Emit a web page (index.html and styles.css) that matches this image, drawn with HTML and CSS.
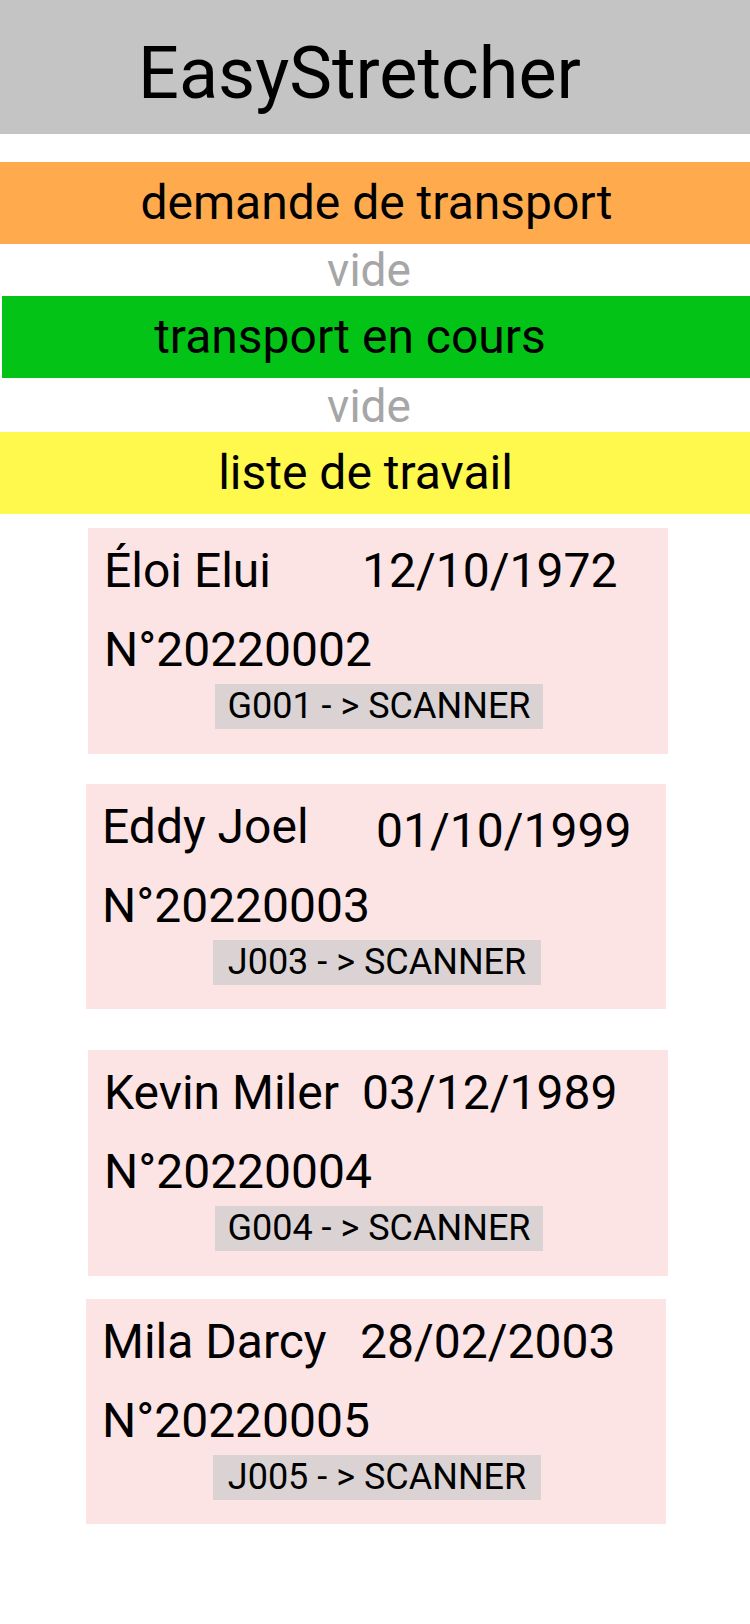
FILE: index.html
```html
<!DOCTYPE html>
<html lang="fr">
<head>
<meta charset="utf-8">
<title>EasyStretcher</title>
<link rel="stylesheet" href="styles.css">
</head>
<body>
<header class="app-header">EasyStretcher</header>

<section class="band band--orange">demande de transport</section>
<div class="empty">vide</div>
<section class="band band--green">transport en cours</section>
<div class="empty empty--tall">vide</div>
<section class="band band--yellow">liste de travail</section>

<main class="worklist">
  <article class="card card--first">
    <div class="card-row">
      <span class="name">Éloi Elui</span>
      <span class="date">12/10/1972</span>
    </div>
    <div class="number">N°20220002</div>
    <div class="chip">G001 - &gt; SCANNER</div>
  </article>

  <article class="card card--left card--gap-m">
    <div class="card-row">
      <span class="name name--wide">Eddy Joel</span>
      <span class="date date--low">01/10/1999</span>
    </div>
    <div class="number">N°20220003</div>
    <div class="chip">J003 - &gt; SCANNER</div>
  </article>

  <article class="card card--gap-l">
    <div class="card-row">
      <span class="name">Kevin Miler</span>
      <span class="date">03/12/1989</span>
    </div>
    <div class="number">N°20220004</div>
    <div class="chip">G004 - &gt; SCANNER</div>
  </article>

  <article class="card card--left card--gap-s">
    <div class="card-row">
      <span class="name">Mila Darcy</span>
      <span class="date">28/02/2003</span>
    </div>
    <div class="number">N°20220005</div>
    <div class="chip">J005 - &gt; SCANNER</div>
  </article>
</main>
</body>
</html>
```

FILE: styles.css
```css
* {
  box-sizing: border-box;
}

html, body {
  margin: 0;
  padding: 0;
  background: #ffffff;
}

body {
  width: 750px;
  min-height: 1624px;
  font-family: Roboto, "Noto Sans", "Liberation Sans", sans-serif;
  color: #000000;
}

.app-header {
  height: 134px;
  background: #c4c4c4;
  font-size: 72px;
  line-height: normal;
  padding-top: 31px;
  padding-left: 138px;
}

.band {
  height: 82px;
  font-size: 48px;
  line-height: 82px;
  text-align: center;
  white-space: nowrap;
}

.band--orange {
  margin-top: 28px;
  background: #ffab4d;
  padding-left: 3px;
}

.band--green {
  margin-left: 2px;
  background: #03c416;
  padding-right: 52px;
}

.band--yellow {
  background: #fff84d;
  padding-right: 19px;
}

.empty {
  height: 52px;
  font-size: 46px;
  line-height: 52px;
  color: #a6a6a6;
  text-align: center;
  padding-right: 12px;
}

.empty--tall {
  height: 54px;
  line-height: 56px;
}

.worklist {
  display: flex;
  flex-direction: column;
  align-items: flex-start;
  padding-top: 14px;
}

.card {
  width: 580px;
  height: 226px;
  margin-left: 88px;
  background: #fde4e4;
  padding: 13px 14px 0 16px;
  display: flex;
  flex-direction: column;
}

.card--left {
  margin-left: 86px;
  height: 225px;
}

.card--gap-m {
  margin-top: 30px;
}

.card--gap-l {
  margin-top: 41px;
}

.card--gap-s {
  margin-top: 23px;
}

.card-row {
  display: flex;
  align-items: baseline;
  height: 60px;
  line-height: 60px;
  white-space: nowrap;
}

.name {
  width: 258px;
  flex: none;
  font-size: 48px;
}

.name--wide {
  width: 274px;
}

.date {
  font-size: 48px;
}

.date--low {
  position: relative;
  top: 4px;
}

.number {
  margin-top: 19px;
  height: 60px;
  font-size: 48px;
  line-height: 60px;
  white-space: nowrap;
}

.chip {
  align-self: center;
  margin-top: 4px;
  width: 328px;
  height: 45px;
  background: #dbd3d3;
  font-size: 36px;
  line-height: 45px;
  text-align: center;
  white-space: nowrap;
}
```
